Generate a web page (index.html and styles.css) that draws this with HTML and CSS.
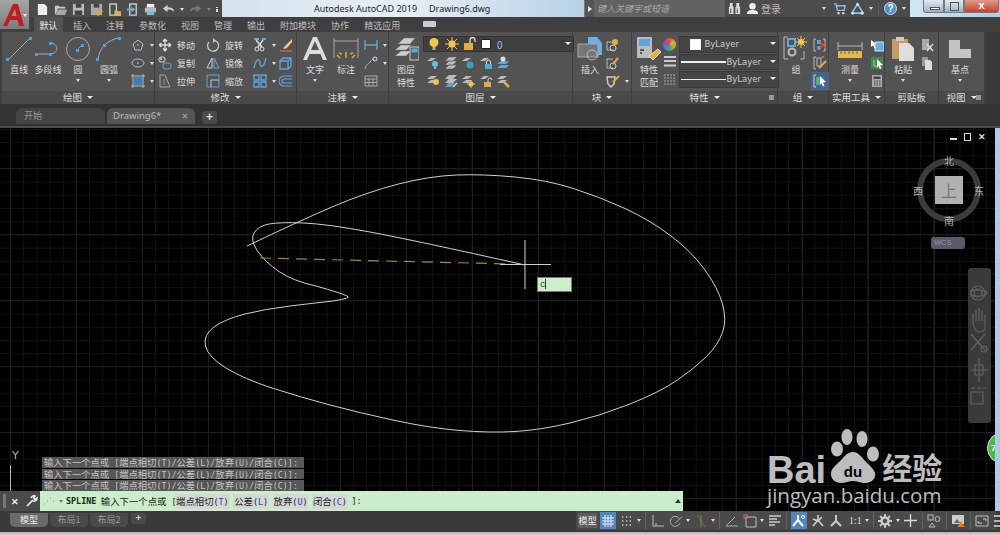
FILE: index.html
```html
<!DOCTYPE html>
<html lang="zh-CN">
<head>
    <meta charset="UTF-8">
    <title>Autodesk AutoCAD 2019 - Drawing6.dwg</title>
    <link rel="stylesheet" href="styles.css">
</head>
<body>
    <div class="app-btn">
        <svg viewBox="0 0 30 30" width="30" height="30"><path fill-rule="evenodd" d="M3 26 L13 4 H18 L24 26 H19 L17.500 20 H10 L7.500 26 Z M11.500 16 H16.500 L15 9 Z" fill="#bf1d22"/></svg>
        <span class="app-caret"></span>
    </div>

    <header class="titlebar">
        <div class="qat">
            <svg class="qi" viewBox="0 0 14 14"><path d="M2 1h7l3 3v9H2z" fill="#eee"/></svg>
            <svg class="qi" viewBox="0 0 14 14"><path d="M1 3h4l1 1h6v2H4L2 12H1z" fill="#ccc"/><path d="M4 7h10l-2 6H2z" fill="#aaa"/></svg>
            <svg class="qi" viewBox="0 0 14 14"><path d="M1 1h12v12H1z" fill="#bbb"/><path d="M4 1h6v4H4zM3 8h8v5H3z" fill="#444"/></svg>
            <svg class="qi" viewBox="0 0 14 14"><path d="M1 1h12v12H1z" fill="#aaa"/><path d="M4 1h6v4H4z" fill="#444"/><path d="M6 12l6-5 2 2-5 5z" fill="#e0a63c"/></svg>
            <svg class="qi" viewBox="0 0 14 14"><path d="M2 1h7v12H2z" fill="none" stroke="#ccc" stroke-width="1.500"/><path d="M7 8h3l1 1h3v5H7z" fill="#e0b050"/></svg>
            <svg class="qi" viewBox="0 0 14 14"><path d="M4 1h7v12H4z" fill="none" stroke="#ccc" stroke-width="1.500"/><path d="M1 6h5V4l4 3-4 3V8H1z" fill="#6ab0e8"/></svg>
            <svg class="qi" viewBox="0 0 14 14"><path d="M3 1h8v4H3z" fill="#eee"/><path d="M1 5h12v5H1z" fill="#bbb"/><path d="M3 9h8v4H3z" fill="#79b7e6"/></svg>
            <svg class="qi" viewBox="0 0 14 14"><path d="M1 6l5-4v2.500c4 0 7 1 7 5-2-2-4-2.500-7-2.500V10z" fill="#ccc"/></svg>
            <span class="caret"></span>
            <svg class="qi" viewBox="0 0 14 14"><path d="M13 6L8 2v2.500c-4 0-7 1-7 5 2-2 4-2.500 7-2.500V10z" fill="#777"/></svg>
            <span class="caret dim"></span>
            <span class="qat-more"></span>
        </div>
        <div class="glass">
            <span class="app-name">Autodesk AutoCAD 2019</span>
            <span class="doc-name">Drawing6.dwg</span>
        </div>
        <div class="search-arrow"></div>
        <div class="search">键入关键字或短语</div>
        <div class="infocenter">
            <svg class="qi" viewBox="0 0 14 14"><path d="M1 5h5v8H1zM8 5h5v8H8zM2 1h3v4H2zM9 1h3v4H9z" fill="#ddd"/><path d="M3 7v5M10 7v5" stroke="#444"/></svg>
            <svg class="qi" viewBox="0 0 14 14"><circle cx="7" cy="4.500" r="3.500" fill="#eee"/><path d="M1 13c0-4 3-4.500 6-4.500s6 .5 6 4.500z" fill="#eee"/></svg>
            <span class="login">登录</span>
            <span class="caret"></span>
            <svg class="qi cart" viewBox="0 0 14 14"><path d="M1 2h2l2 7h7l1-5H4" fill="none" stroke="#8cc0ea" stroke-width="1.500"/><circle cx="6" cy="12" r="1.300" fill="#ddd"/><circle cx="11" cy="12" r="1.300" fill="#ddd"/></svg>
            <svg class="qi" viewBox="0 0 14 14"><path d="M7 2L13 12H1z" fill="none" stroke="#8cc0ea" stroke-width="1.800"/><circle cx="7" cy="3" r="1.600" fill="#ddd"/><circle cx="2" cy="12" r="1.600" fill="#ddd"/><circle cx="12" cy="12" r="1.600" fill="#ddd"/></svg>
            <span class="caret"></span>
            <span class="info-sep"></span>
            <span class="help">?</span>
            <span class="caret"></span>
        </div>
        <div class="glass-right">
            <div class="winbtns">
                <span class="winbtn min"></span>
                <span class="winbtn max"></span>
                <span class="winbtn close">x</span>
            </div>
        </div>
    </header>

    <nav class="ribbon-tabs">
        <span class="rtab active">默认</span>
        <span class="rtab">插入</span>
        <span class="rtab">注释</span>
        <span class="rtab">参数化</span>
        <span class="rtab">视图</span>
        <span class="rtab">管理</span>
        <span class="rtab">输出</span>
        <span class="rtab">附加模块</span>
        <span class="rtab">协作</span>
        <span class="rtab">精选应用</span>
        <span class="rtab-video"></span>
    </nav>

    <section class="ribbon">
        <!-- 绘图 -->
        <div class="panel w-draw">
            <div class="panel-body">
                <div class="big w28">
                    <svg width="26" height="26" viewBox="0 0 26 26"><path d="M2 24L24 2" stroke="#aaa"/><rect x="0" y="22" width="3" height="3" fill="#4aa3e0"/><rect x="23" y="1" width="3" height="3" fill="#4aa3e0"/></svg>
                    <span>直线</span>
                </div>
                <div class="big w30">
                    <svg width="26" height="26" viewBox="0 0 26 26"><path d="M1 18H15C24 18 24 7 15 7" fill="none" stroke="#aaa"/><rect x="0" y="17" width="3" height="3" fill="#4aa3e0"/><rect x="14" y="17" width="3" height="3" fill="#4aa3e0"/><rect x="14" y="6" width="3" height="3" fill="#4aa3e0"/></svg>
                    <span>多段线</span>
                </div>
                <div class="big w30">
                    <svg width="26" height="26" viewBox="0 0 26 26"><circle cx="13" cy="13" r="11.500" fill="none" stroke="#aaa"/><path d="M12 14L17 9" stroke="#4aa3e0"/><rect x="11" y="13" width="3" height="3" fill="#4aa3e0"/><rect x="16" y="8" width="3" height="3" fill="#4aa3e0"/></svg>
                    <span>圆</span><i class="caret"></i>
                </div>
                <div class="big w32">
                    <svg width="26" height="26" viewBox="0 0 26 26"><path d="M2 24C3 12 12 3 24 2" fill="none" stroke="#aaa"/><rect x="0" y="22" width="3" height="3" fill="#4aa3e0"/><rect x="7" y="8" width="3" height="3" fill="#4aa3e0"/><rect x="22" y="1" width="3" height="3" fill="#4aa3e0"/></svg>
                    <span>圆弧</span><i class="caret"></i>
                </div>
                <div class="col icons-only gap-l">
                    <div class="row"><svg class="si" viewBox="0 0 14 14"><path d="M7 2l5 4-2 6H4L2 6z" fill="none" stroke="#bbb"/><rect x="6" y="6" width="2" height="2" fill="#4aa3e0"/></svg><i class="caret"></i></div>
                    <div class="row"><svg class="si" viewBox="0 0 14 14"><ellipse cx="7" cy="7" rx="6" ry="4" fill="none" stroke="#bbb"/><rect x="6" y="6" width="2" height="2" fill="#4aa3e0"/></svg><i class="caret"></i></div>
                    <div class="row"><svg class="si" viewBox="0 0 14 14"><path d="M2 0v14M12 0v14M0 2h14M0 12h14" stroke="#bbb"/><rect x="3" y="3" width="8" height="8" fill="#3f7fb5"/></svg><i class="caret"></i></div>
                </div>
            </div>
            <div class="panel-title">绘图<i class="caret lt"></i></div>
        </div>

        <!-- 修改 -->
        <div class="panel w-modify">
            <div class="panel-body">
                <div class="col w48">
                    <div class="row"><svg class="si" viewBox="0 0 14 14"><path d="M7 1v12M1 7h12M7 1L5 3.500M7 1l2 2.500M7 13l-2-2.500M7 13l2-2.500M1 7l2.500-2M1 7l2.500 2M13 7l-2.500-2M13 7l-2.500 2" fill="none" stroke="#ddd" stroke-width="1.300"/></svg><span>移动</span></div>
                    <div class="row"><svg class="si" viewBox="0 0 14 14"><rect x="1" y="1" width="6" height="5" rx="2" fill="none" stroke="#ddd"/><circle cx="3" cy="3" r="1" fill="#ddd"/><rect x="5" y="7" width="8" height="6" rx="2" fill="none" stroke="#5fa6dc"/></svg><span>复制</span></div>
                    <div class="row"><svg class="si" viewBox="0 0 14 14"><path d="M2 1h5l5 12H2z" fill="none" stroke="#aaa"/><path d="M6 5v6" stroke="#5fa6dc"/></svg><span>拉伸</span></div>
                </div>
                <div class="col w45">
                    <div class="row"><svg class="si" viewBox="0 0 14 14"><path d="M9 2.500A5.500 5.500 0 1 1 3 4" fill="none" stroke="#ccc" stroke-width="1.300"/><path d="M7 0l3 2.500L7 5z" fill="#ccc"/></svg><span>旋转</span></div>
                    <div class="row"><svg class="si" viewBox="0 0 14 14"><path d="M6 2L1 12h5z" fill="none" stroke="#ccc"/><path d="M8 2l5 10H8z" fill="none" stroke="#5fa6dc"/></svg><span>镜像</span></div>
                    <div class="row"><svg class="si" viewBox="0 0 14 14"><path d="M1 1h12v12H1z" fill="none" stroke="#5fa6dc"/><path d="M5 13V6h8" fill="none" stroke="#ccc"/></svg><span>缩放</span></div>
                </div>
                <div class="col icons-only w27">
                    <div class="row"><svg class="si" viewBox="0 0 14 14"><path d="M1 1h5M9 1h4" stroke="#6aa9dc" stroke-width="2"/><path d="M3 2l6 7M10 2L5 9" stroke="#ddd" stroke-width="1.500"/><circle cx="4" cy="11" r="2" fill="none" stroke="#ddd"/><circle cx="9" cy="11" r="2" fill="none" stroke="#ddd"/></svg><i class="caret"></i></div>
                    <div class="row"><svg class="si" viewBox="0 0 14 14"><path d="M1 12C3 2 7 2 7 7s4 5 6-5" fill="none" stroke="#5fa6dc" stroke-width="1.300"/></svg><i class="caret"></i></div>
                    <div class="row"><svg class="si" viewBox="0 0 14 14"><path d="M1 1h5v5H1zM8 1h5v5H8zM1 8h5v5H1zM8 8h5v5H8z" fill="none" stroke="#5fa6dc" stroke-width="1.300"/></svg><i class="caret"></i></div>
                </div>
                <div class="col icons-only">
                    <div class="row"><svg class="si" viewBox="0 0 14 14"><path d="M13 1L6 8l2 2 5-6z" fill="#f0c878"/><path d="M6 8l-2 3 4-1z" fill="#ddd"/><path d="M1 13h12" stroke="#d85a4a" stroke-width="1.500"/></svg></div>
                    <div class="row"><svg class="si" viewBox="0 0 14 14"><path d="M1 5h8v8H1zM1 5l3-3h8v8l-3 3M9 5l3-3" fill="none" stroke="#5fa6dc" stroke-width="1.300"/></svg></div>
                    <div class="row"><svg class="si" viewBox="0 0 14 14"><path d="M13 2H5a5 5 0 0 0 0 10h8M13 5H5a2 2 0 0 0 0 4h8" fill="none" stroke="#5fa6dc" stroke-width="1.200"/></svg></div>
                </div>
            </div>
            <div class="panel-title">修改<i class="caret lt"></i></div>
        </div>

        <!-- 注释 -->
        <div class="panel w-note">
            <div class="panel-body">
                <div class="big w30">
                    <svg width="26" height="26" viewBox="0 0 26 26"><path fill-rule="evenodd" d="M1 24L11 1h4l10 23h-4l-2.500-6H7.500L5 24zM9 14h8l-4-9z" fill="#ddd"/></svg>
                    <span>文字</span><i class="caret"></i>
                </div>
                <div class="big w32">
                    <svg width="26" height="26" viewBox="0 0 26 26"><path d="M1 2v20M25 2v20M1 5h24" stroke="#aaa" fill="none"/><path d="M13 22v-6M7 22l-3-3M19 22l3-3M9 18l-3-1M17 18l3-1" stroke="#e0a63c" stroke-width="1.500"/></svg>
                    <span>标注</span>
                </div>
                <div class="col icons-only">
                    <div class="row"><svg class="si" viewBox="0 0 14 14"><path d="M1 2v10M13 2v10M1 7h12" stroke="#5fa6dc" stroke-width="1.300"/></svg><i class="caret"></i></div>
                    <div class="row"><svg class="si" viewBox="0 0 14 14"><path d="M1 13C2 8 4 9 6 6s3-3 4-3" fill="none" stroke="#bbb"/><circle cx="11" cy="3" r="2" fill="none" stroke="#ddd"/></svg><i class="caret"></i></div>
                    <div class="row"><svg class="si" viewBox="0 0 14 14"><path d="M1 2h12v10H1zM1 5h12M1 8.500h12M5 5v7M9 5v7" fill="none" stroke="#aaa"/></svg></div>
                </div>
            </div>
            <div class="panel-title">注释<i class="caret lt"></i></div>
        </div>

        <!-- 图层 -->
        <div class="panel w-layer">
            <div class="panel-body">
                <div class="big w28">
                    <svg width="26" height="26" viewBox="0 0 26 26"><path d="M5 8l6-6h11l-5 6zM2 14l6-5h10l-5 5zM2 20l6-5h10l-5 5z" fill="#ccc" stroke="#666" stroke-width=".5"/><rect x="17" y="11" width="9" height="13" fill="#555" stroke="#ccc"/><rect x="18.500" y="12.500" width="6" height="4" fill="#5fa6dc"/></svg>
                    <span>图层</span><span class="second">特性</span>
                </div>
                <div class="layer-main">
                    <div class="layer-combo">
                        <svg class="si" viewBox="0 0 14 14"><circle cx="7" cy="5.500" r="4.500" fill="#f5c44e"/><path d="M5.500 10h3v3h-3z" fill="#aaa"/></svg>
                        <svg class="si" viewBox="0 0 14 14"><circle cx="7" cy="7" r="3.500" fill="#f5c44e"/><path d="M7 0v14M0 7h14M2 2l10 10M12 2L2 12" stroke="#f5c44e"/></svg>
                        <svg class="si" viewBox="0 0 14 14"><rect x="1" y="6" width="9" height="7" fill="#e6ac3c"/><path d="M7 6V3a2.500 2.500 0 0 1 5 0v2" fill="none" stroke="#ddd" stroke-width="1.300"/></svg>
                        <span class="swatch"></span>
                        <span class="layer-name">0</span>
                        <i class="combo-caret"></i>
                    </div>
                    <div class="layer-row">
                        <svg class="si" viewBox="0 0 14 14"><path d="M1 5l4-3h5L6 5z" fill="#bbb"/><circle cx="9" cy="8" r="3" fill="#63c0e0"/><path d="M8 11h2v2H8z" fill="#aaa"/></svg>
                        <svg class="si" viewBox="0 0 14 14"><path d="M1 5l4-4h8L9 5zM1 9l4-4h8L9 9zM1 13l4-4h8L9 13z" fill="#bbb" stroke="#555" stroke-width=".5"/></svg>
                        <svg class="si" viewBox="0 0 14 14"><path d="M1 5l4-3h5L6 5z" fill="#bbb"/><circle cx="9" cy="9" r="3.500" fill="#3fa0b5"/></svg>
                        <svg class="si" viewBox="0 0 14 14"><path d="M1 5l4-3h5L6 5z" fill="#bbb"/><rect x="6" y="8" width="7" height="5" fill="#4bb0d0"/><path d="M7.500 8V6a2 2 0 0 1 4 0v2" fill="none" stroke="#ddd"/></svg>
                        <svg class="si" viewBox="0 0 14 14"><path d="M1 8l4-3h8l-3 3zM1 12l4-3h8l-3 3z" fill="#5fa6dc"/><circle cx="7" cy="3" r="2.500" fill="#ddd"/></svg>
                    </div>
                    <div class="layer-row">
                        <svg class="si" viewBox="0 0 14 14"><path d="M1 5l4-3h6L7 5zM1 9l4-3h6L7 9z" fill="#bbb"/><circle cx="10" cy="8" r="3" fill="#f5c44e"/></svg>
                        <svg class="si" viewBox="0 0 14 14"><path d="M1 5l4-4h8L9 5zM1 9l4-4h8L9 9z" fill="#bbb"/><path d="M1 13l4-4h6l-4 4z" fill="#5fa6dc"/><path d="M9 13l4-4" stroke="#ddd" stroke-width="1.500"/></svg>
                        <svg class="si" viewBox="0 0 14 14"><path d="M1 5l4-3h6L7 5zM1 9l4-3h6L7 9z" fill="#bbb"/><circle cx="10" cy="10" r="2.500" fill="#f5c44e"/><path d="M10 6v8M6 10h8" stroke="#f5c44e"/></svg>
                        <svg class="si" viewBox="0 0 14 14"><path d="M1 5l4-3h5L6 5z" fill="#bbb"/><rect x="5" y="8" width="7" height="5" fill="#e6ac3c"/><path d="M9 8V6a2 2 0 0 1 4 0" fill="none" stroke="#ddd"/></svg>
                        <svg class="si" viewBox="0 0 14 14"><path d="M1 5l4-3h6L7 5zM1 9l4-3h6L7 9z" fill="#bbb"/><path d="M8 8l5 5" stroke="#e6ac3c" stroke-width="2.500"/></svg>
                    </div>
                </div>
            </div>
            <div class="panel-title">图层<i class="caret lt"></i></div>
        </div>

        <!-- 块 -->
        <div class="panel w-block">
            <div class="panel-body">
                <div class="big w28">
                    <svg width="26" height="26" viewBox="0 0 26 26"><path d="M11 1h9l5 6v12H11z" fill="#6ab0e8"/><rect x="1" y="8" width="20" height="13" fill="#777" stroke="#aaa"/><circle cx="15" cy="19" r="5" fill="none" stroke="#bbb"/></svg>
                    <span>插入</span>
                </div>
                <div class="col icons-only">
                    <div class="row"><svg class="si" viewBox="0 0 14 14"><path d="M1 4h6M1 4v8h6" fill="none" stroke="#bbb"/><circle cx="9" cy="4" r="3" fill="#e6ac3c"/><circle cx="7" cy="10" r="3" fill="none" stroke="#ccc"/></svg></div>
                    <div class="row"><svg class="si" viewBox="0 0 14 14"><path d="M1 3h6M1 3v9h6" fill="none" stroke="#bbb"/><circle cx="7" cy="10" r="3" fill="none" stroke="#ccc"/><path d="M7 8l5-6" stroke="#e6ac3c" stroke-width="2"/></svg></div>
                    <div class="row"><svg class="si" viewBox="0 0 14 14"><path d="M1 3h8l-1 7-3 3-3-3z" fill="none" stroke="#ccc" stroke-width="1.500"/><path d="M7 8l6-6" stroke="#e6ac3c" stroke-width="2"/></svg><i class="caret"></i></div>
                </div>
            </div>
            <div class="panel-title">块<i class="caret lt"></i></div>
        </div>

        <!-- 特性 -->
        <div class="panel w-prop">
            <div class="panel-body">
                <div class="big w28">
                    <svg width="26" height="26" viewBox="0 0 26 26"><rect x="1" y="1" width="15" height="21" rx="1" fill="#bbb"/><rect x="3" y="3" width="11" height="7" fill="#5fa6dc"/><path d="M4 14h4M4 17h2" stroke="#555" stroke-width="2"/><path d="M13 20l9-7 3 3-8 8z" fill="#e6ac3c" stroke="#ddd"/></svg>
                    <span>特性</span><span class="second">匹配</span>
                </div>
                <div class="col prop-icons">
                    <span class="wheel"></span>
                    <svg class="si" viewBox="0 0 14 14"><path d="M1 2h12M1 6h12M1 10.500h12" stroke="#ccc" stroke-width="2"/></svg>
                    <svg class="si" viewBox="0 0 14 14"><path d="M1 2h12M1 5h12M1 8h12M1 11h12" stroke="#aaa" stroke-dasharray="2 1"/></svg>
                </div>
                <div class="prop-combos">
                    <div class="pcombo"><span class="swatch big-sw"></span><span class="bylayer first">ByLayer</span><i class="combo-caret"></i></div>
                    <div class="pcombo"><span class="ln thick"></span><span class="bylayer">ByLayer</span><i class="combo-caret"></i></div>
                    <div class="pcombo"><span class="ln"></span><span class="bylayer">ByLayer</span><i class="combo-caret"></i></div>
                </div>
            </div>
            <div class="panel-title">特性<i class="caret lt"></i><i class="launch"></i></div>
        </div>

        <!-- 组 -->
        <div class="panel w-group">
            <div class="panel-body">
                <div class="big w30">
                    <svg width="26" height="26" viewBox="0 0 26 26"><path d="M5 1H1v22h4M17 23h4v-8" fill="none" stroke="#bbb"/><rect x="5" y="3" width="7" height="7" fill="none" stroke="#5fa6dc" stroke-width="2"/><circle cx="9" cy="16" r="3.500" fill="none" stroke="#bbb" stroke-width="2"/><circle cx="18" cy="6" r="3" fill="#f5c44e"/><path d="M18 0v12M12 6h12M14 2l8 8M22 2l-8 8" stroke="#f5c44e"/></svg>
                    <span>组</span>
                </div>
                <div class="col icons-only">
                    <div class="row"><svg class="si" viewBox="0 0 14 14"><path d="M3 1H1v12h2M10 1h2v12h-2" fill="none" stroke="#bbb"/><rect x="4" y="2" width="4" height="4" fill="#5fa6dc"/><circle cx="6" cy="10" r="2" fill="#5fa6dc"/><path d="M7 4l6 6M13 4l-6 6" stroke="#d84a3c" stroke-width="1.500"/></svg></div>
                    <div class="row"><svg class="si" viewBox="0 0 14 14"><path d="M3 1H1v12h2M9 1h2" fill="none" stroke="#bbb"/><rect x="4" y="2" width="4" height="8" fill="none" stroke="#bbb"/><path d="M6 12l7-7" stroke="#e6ac3c" stroke-width="2"/></svg></div>
                    <div class="row selected"><svg class="si" viewBox="0 0 14 14"><path d="M3 1H1v12h2" fill="none" stroke="#ccc"/><rect x="3" y="3" width="4" height="8" fill="#4fb080"/><path d="M7 2l6 6-3 .5 1.500 3.500-1.500 .5L8.500 9 7 11z" fill="#fff"/></svg></div>
                </div>
            </div>
            <div class="panel-title">组<i class="caret lt"></i></div>
        </div>

        <!-- 实用工具 -->
        <div class="panel w-util">
            <div class="panel-body">
                <div class="big w36">
                    <svg width="26" height="26" viewBox="0 0 26 26"><path d="M1 6v8M25 6v8M1 10h24" stroke="#bbb"/><rect x="1" y="15" width="24" height="7" fill="#e2b94a"/><path d="M4 15v3M8 15v3M12 15v3M16 15v3M20 15v3" stroke="#665" /></svg>
                    <span>测量</span><i class="caret"></i>
                </div>
                <div class="col icons-only">
                    <div class="row"><svg class="si" viewBox="0 0 14 14"><rect x="5" y="4" width="9" height="9" fill="#6ab0e8" stroke="#ddd"/><path d="M1 2l5 4-2 .5 2 3-1.500.5L3 7.500 1 9z" fill="#fff"/></svg></div>
                    <div class="row"><svg class="si" viewBox="0 0 14 14"><rect x="1" y="1" width="12" height="12" fill="#3f8a50"/><path d="M4 4v6h4" fill="none" stroke="#9fd6a8"/><path d="M7 3l6 6-3 .5 1.500 3-1.500 .5L8.500 10 7 12z" fill="#fff"/></svg></div>
                    <div class="row"><svg class="si" viewBox="0 0 14 14"><rect x="2" y="1" width="10" height="12" fill="#aaa"/><rect x="3.500" y="2.500" width="7" height="2.500" fill="#444"/><path d="M4 7h1.500M6.500 7H8M9 7h1.500M4 9h1.500M6.500 9H8M9 9h1.500M4 11h1.500M6.500 11H8M9 11h1.500" stroke="#444"/></svg></div>
                </div>
            </div>
            <div class="panel-title">实用工具<i class="caret lt"></i></div>
        </div>

        <!-- 剪贴板 -->
        <div class="panel w-clip">
            <div class="panel-body">
                <div class="big w30">
                    <svg width="26" height="26" viewBox="0 0 26 26"><path d="M2 3h16v20H2z" fill="#c89a5e"/><rect x="6" y="1" width="8" height="4" fill="#ccc"/><path d="M9 7h10l5 5v13H9z" fill="#ddd"/></svg>
                    <span>粘贴</span><i class="caret"></i>
                </div>
                <div class="col icons-only">
                    <div class="row"><svg class="si" viewBox="0 0 14 14"><path d="M2 1h7v11H2z" fill="#aaa"/><path d="M7 6l6 7M13 6l-6 7" stroke="#ddd" stroke-width="1.500"/></svg></div>
                    <div class="row"><svg class="si" viewBox="0 0 14 14"><path d="M2 1h6v9H2z" fill="#999"/><path d="M5 4h5l2 2v8H5z" fill="#ddd"/></svg></div>
                </div>
            </div>
            <div class="panel-title">剪贴板</div>
        </div>

        <!-- 视图 -->
        <div class="panel w-view">
            <div class="panel-body">
                <div class="big w36">
                    <svg width="26" height="26" viewBox="0 0 26 26"><path d="M2 4h11v9h11v9H2z" fill="#c4c4c4"/></svg>
                    <span>基点</span><i class="caret"></i>
                </div>
            </div>
            <div class="panel-title">视图<i class="caret lt"></i><i class="launch"></i></div>
        </div>
        <div class="ribbon-end"></div>
    </section>

    <div class="file-tabs">
        <span class="ftab">开始</span>
        <span class="ftab current">Drawing6*<b>×</b></span>
        <span class="ftab-add">+</span>
    </div>

    <main class="canvas">
        <svg class="drawing" viewBox="0 0 1000 534" width="1000" height="534">
            <path d="M247 246 Q297 222 332 207 Q367 192 398.500 184 Q430 176 456.500 175 Q483 174 515 177 Q547 180 573.500 188.500 Q600 197 625 208.500 Q650 220 671 236 Q692 252 705 270 Q718 288 722.500 304 Q727 320 722.500 332.500 Q718 345 706.500 356.500 Q695 368 677.500 380 Q660 392 630 404 Q600 416 570 423 Q540 430 515 431.500 Q490 433 460 430.500 Q430 428 395 420.500 Q360 413 330 405 Q300 397 272 388 Q244 379 226 368 Q208 357 205.500 346 Q203 335 214 327 Q225 319 245 314 Q265 309 290 306 Q315 303 333 301 Q353 298 347 296 Q341 293 316 286 Q293 281 279 271.500 Q265 262 257.500 251 Q250 240 254 233 Q258 226 269 224 Q280 222 303.500 223 Q327 224 370 232 Q413 240 525 265" fill="none" stroke="#d0d0d0" stroke-width="1"/>
            <path d="M260 258 L510 264" fill="none" stroke="#a8852c" stroke-width="1.200" stroke-dasharray="11 7"/>
            <path d="M525 240V289M500 264.500H551" stroke="#cfcfcf" stroke-width="1"/>
            <path d="M10.500 465V491" stroke="#bbb"/>
        </svg>

        <div class="win-ctrl">
            <span class="wc-min"></span><span class="wc-max"></span><span class="wc-close">✕</span>
        </div>

        <div class="viewcube">
            <span class="ring"></span>
            <span class="face">上</span>
            <span class="dir n">北</span>
            <span class="dir s">南</span>
            <span class="dir w">西</span>
            <span class="dir e">东</span>
        </div>
        <div class="wcs">WCS<i></i></div>

        <div class="navbar">
            <svg width="20" height="150" viewBox="0 0 20 150" fill="none" stroke="#626262" stroke-width="1.200">
                <circle cx="8" cy="19" r="7"/><circle cx="8" cy="19" r="4"/><ellipse cx="8" cy="19" rx="9" ry="3"/>
                <path d="M3 49V39M6 47V36M9 47V34M12 47V36M15 49V41M3 49c1 6 3 9 7 9s6-3 5-9"/>
                <path d="M1 60L15 76M15 60L1 76"/><circle cx="14" cy="75" r="3"/>
                <path d="M9 84V108M1 96H18M5 91H13V101H5Z"/>
                <path d="M1 114H5M7 114H11M13 114H17M1 118H13V130H1Z"/>
            </svg>
        </div>

        <div class="dyn-input">c</div>

        <div class="ucs-y">Y</div>

        <div class="history">
            <div>输入下一个点或<span class="lat"> [</span>端点相切<span class="lat">(T)/</span>公差<span class="lat">(L)/</span>放弃<span class="lat">(U)/</span>闭合<span class="lat">(C)]:</span></div>
            <div>输入下一个点或<span class="lat"> [</span>端点相切<span class="lat">(T)/</span>公差<span class="lat">(L)/</span>放弃<span class="lat">(U)/</span>闭合<span class="lat">(C)]:</span></div>
            <div>输入下一个点或<span class="lat"> [</span>端点相切<span class="lat">(T)/</span>公差<span class="lat">(L)/</span>放弃<span class="lat">(U)/</span>闭合<span class="lat">(C)]:</span></div>
        </div>

        <div class="cmdline">
            <div class="cmd-handle">
                <span class="grip"></span>
                <span class="cmd-x">✕</span>
                <svg width="12" height="12" viewBox="0 0 12 12"><path d="M1 11L7 5M5 3a3 3 0 0 1 4-2L7.500 3 9 4.500 11 3a3 3 0 0 1-4 3" fill="none" stroke="#eee" stroke-width="1.600"/></svg>
            </div>
            <div class="cmd-input">
                <svg width="12" height="10" viewBox="0 0 12 10"><path d="M1 8h1M4 5h1M7 2h1M10 5h1" stroke="#7ab4dc" stroke-width="1.200"/></svg>
                <i class="caret dark"></i>
                <b class="lat">SPLINE</b>
                <span>输入下一个点或<span class="lat"> [</span></span>
                <span class="opt first">端点相切<span class="lat">(<em>T</em>)</span></span>
                <span class="opt">公差<span class="lat">(<em>L</em>)</span></span>
                <span class="opt">放弃<span class="lat">(<em>U</em>)</span></span>
                <span class="opt">闭合<span class="lat">(<em>C</em>)</span></span>
                <span class="lat">]:</span>
                <i class="cmd-up"></i>
            </div>
        </div>

        <div class="badge">73</div>

        <div class="watermark">
            <div class="wm-top">
                <span class="wm-bai">Bai</span>
                <svg class="wm-paw" width="52" height="55" viewBox="0 0 52 55">
                    <ellipse cx="8" cy="21" rx="6" ry="7.500" fill="#bdbdbd"/>
                    <ellipse cx="18" cy="9" rx="5.500" ry="8" fill="#bdbdbd"/>
                    <ellipse cx="33" cy="11" rx="5.500" ry="8" fill="#bdbdbd"/>
                    <ellipse cx="44" cy="26" rx="6" ry="7.500" fill="#bdbdbd"/>
                    <path d="M24 24c6 0 9 6 14 11c7 6 9 10 8 13c-1 5-6 7-10 7c-4 0-8-2-12-2s-8 2-12 2c-6 0-10-4-10-9c0-5 4-8 8-12c4-3 7-10 14-10z" fill="#bdbdbd"/>
                    <text x="24" y="49" text-anchor="middle" class="wm-du">du</text>
                </svg>
                <span class="wm-jy">经验</span>
            </div>
            <div class="wm-url">jingyan.baidu.com</div>
        </div>
    </main>

    <footer class="bottom">
        <div class="layout-tabs">
            <span class="ltab current">模型</span>
            <span class="ltab">布局1</span>
            <span class="ltab">布局2</span>
            <span class="ltab-add">+</span>
        </div>
        <div class="status">
            <span class="st-model">模型</span>
            <span class="st on"><svg width="12" height="12" viewBox="0 0 12 12"><path d="M3 0v12M6 0v12M9 0v12M0 3h12M0 6h12M0 9h12" stroke="#eee"/></svg></span>
            <span class="st"><svg width="12" height="12" viewBox="0 0 12 12"><path d="M1 2h10M1 6h10M1 10h10" stroke="#ccc" stroke-width="1.400" stroke-dasharray="1.400 2.400"/></svg></span>
            <i class="caret"></i>
            <span class="st-sep"></span>
            <span class="st"><svg width="14" height="14" viewBox="0 0 14 14"><path d="M2 1v11h11M5 12V9" fill="none" stroke="#bbb"/></svg></span>
            <span class="st"><svg width="14" height="14" viewBox="0 0 14 14"><path d="M10 4a5 5 0 1 0 1 5M6 9l7-6" fill="none" stroke="#aaa"/></svg></span>
            <i class="caret"></i>
            <span class="st"><svg width="14" height="14" viewBox="0 0 14 14"><path d="M3 1l8 12" stroke="#c44"/><path d="M7 1v12" stroke="#4a4"/></svg></span>
            <i class="caret"></i>
            <span class="st-sep"></span>
            <span class="st"><svg width="14" height="14" viewBox="0 0 14 14"><path d="M1 12h12M1 12l9-9" fill="none" stroke="#aaa"/></svg></span>
            <span class="st"><svg width="14" height="14" viewBox="0 0 14 14"><path d="M3 3h10v10H3z" fill="none" stroke="#bbb"/><rect x="1" y="1" width="3" height="3" fill="none" stroke="#d66"/></svg></span>
            <i class="caret"></i>
            <span class="st"><svg width="14" height="14" viewBox="0 0 14 14"><path d="M1 2h12M1 5h8M1 8h11M1 11h6" stroke="#ccc" stroke-width="1.500"/></svg></span>
            <span class="st-sep"></span>
            <span class="st on"><svg width="14" height="14" viewBox="0 0 14 14"><path d="M6 1v5L1 12M6 6l5 6" fill="none" stroke="#fff" stroke-width="2"/><circle cx="11" cy="3" r="1.500" fill="none" stroke="#fff"/></svg></span>
            <span class="st"><svg width="14" height="14" viewBox="0 0 14 14"><path d="M7 1v5L2 12M7 6l5 6M2 5l5 2 4-4" fill="none" stroke="#ccc" stroke-width="1.600"/></svg></span>
            <span class="st"><svg width="14" height="14" viewBox="0 0 14 14"><path d="M7 1v6L2 12M7 7l5 5" fill="none" stroke="#ccc" stroke-width="2"/></svg></span>
            <span class="st-scale">1:1</span>
            <i class="caret"></i>
            <span class="st-sep"></span>
            <span class="st"><svg width="14" height="14" viewBox="0 0 14 14"><circle cx="7" cy="7" r="3.500" fill="none" stroke="#ccc" stroke-width="2.500"/><path d="M7 0v3M7 11v3M0 7h3M11 7h3M2 2l2 2M10 10l2 2M12 2l-2 2M4 10l-2 2" stroke="#ccc" stroke-width="1.800"/></svg></span>
            <i class="caret"></i>
            <span class="st plus"><svg width="13" height="13" viewBox="0 0 13 13"><path d="M6.500 0v13M0 6.500h13" stroke="#ddd" stroke-width="1.300"/></svg></span>
            <span class="st-sep"></span>
            <span class="st"><svg width="14" height="14" viewBox="0 0 14 14"><rect x="1" y="1" width="5" height="5" fill="none" stroke="#bbb"/><circle cx="10.500" cy="5" r="2.500" fill="none" stroke="#bbb"/><path d="M5 9l3 4H2z" fill="none" stroke="#bbb"/></svg></span>
            <span class="st-sep"></span>
            <span class="st"><svg width="14" height="14" viewBox="0 0 14 14"><rect x="1" y="1" width="12" height="9" fill="#ccc"/><path d="M3 9l3-4 3 4z" fill="#666"/><path d="M10 7l3.500 6h-7z" fill="#e87c20"/></svg></span>
            <span class="st-sep"></span>
            <span class="st"><svg width="14" height="14" viewBox="0 0 14 14"><path d="M1 2h12v10H1z" fill="none" stroke="#bbb"/><path d="M3 9h4M3 9V7M11 5H8M11 5v2" stroke="#ccc"/></svg></span>
            <span class="st last"><svg width="14" height="14" viewBox="0 0 14 14"><path d="M1 2h12M1 7h12M1 12h12" stroke="#ddd" stroke-width="1.500"/></svg></span>
        </div>
    </footer>
    <div class="window-edge"></div>
</body>
</html>
```

FILE: styles.css
```css
* {
    box-sizing: border-box;
}

html, body {
    margin: 0;
    padding: 0;
    height: 534px;
    overflow: hidden;
}

body {
    width: 1000px;
    display: flex;
    flex-direction: column;
    position: relative;
    background-color: #3a3a3a;
    color: #ddd;
    font-family: "Noto Sans CJK SC", "Liberation Sans", sans-serif;
    font-size: 9px;
}

svg {
    display: block;
    flex: none;
}

i {
    font-style: normal;
}

.caret {
    display: inline-block;
    flex: none;
    width: 0;
    height: 0;
    border-left: 2.500px solid transparent;
    border-right: 2.500px solid transparent;
    border-top: 3px solid #ddd;
}

.caret.dim {
    border-top-color: #888;
}

.caret.lt {
    margin-left: 5px;
    border-left-width: 3.500px;
    border-right-width: 3.500px;
    border-top-width: 3.500px;
    border-top-color: #eee;
}

.caret.dark {
    border-top-color: #777;
}

/* title bar */
.app-btn {
    position: absolute;
    left: 0;
    top: 0;
    z-index: 3;
    width: 30px;
    height: 30px;
    background: linear-gradient(#a6a6a6, #7c7c7c);
    border-right: 1px solid #444;
    border-bottom: 1px solid #444;
}

.app-caret {
    position: absolute;
    right: 2px;
    top: 14px;
    border-left: 2.500px solid transparent;
    border-right: 2.500px solid transparent;
    border-top: 3px solid #eee;
}

.titlebar {
    height: 17px;
    flex: none;
    display: flex;
}

.qat {
    width: 222px;
    padding: 1px 4px 0 36px;
    display: flex;
    gap: 5px;
    align-items: center;
    background-color: #4c4c4c;
}

.qi {
    width: 13px;
    height: 13px;
}

.qat-more {
    width: 6px;
    height: 5px;
    border-top: 1px solid #ddd;
    border-bottom: 3px solid #ddd;
}

.glass {
    width: 362px;
    padding-left: 92px;
    display: flex;
    align-items: center;
    gap: 12px;
    background: linear-gradient(90deg, #d5e3f0, #e6eff6 50%, #b7d1e6);
    color: #222;
    font-family: "Noto Sans", sans-serif;
    font-size: 9px;
    white-space: nowrap;
}

.search-arrow {
    width: 10px;
    background-color: #555;
    border-left: 1px solid #777;
    position: relative;
}

.search-arrow::after {
    content: "";
    position: absolute;
    left: 3px;
    top: 6px;
    border-top: 3px solid transparent;
    border-bottom: 3px solid transparent;
    border-left: 4px solid #eee;
}

.search {
    width: 131px;
    padding: 1px 0 0 3px;
    background-color: #626262;
    color: #a8a8a8;
    font-size: 9px;
    font-style: italic;
    line-height: 16px;
}

.infocenter {
    width: 185px;
    padding-left: 3px;
    display: flex;
    align-items: center;
    gap: 5px;
    background-color: #4c4c4c;
}

.login {
    width: 56px;
    margin-left: -3px;
    color: #bbb;
    font-size: 10px;
}

.cart {
    margin-left: 2px;
}

.info-sep {
    width: 1px;
    height: 13px;
    background-color: #5c5c5c;
}

.help {
    width: 13px;
    height: 13px;
    border-radius: 50%;
    background-color: #4a90d4;
    border: 1px solid #ddd;
    color: #fff;
    font-family: "Liberation Sans", sans-serif;
    font-size: 10px;
    font-weight: bold;
    line-height: 11px;
    text-align: center;
}

.glass-right {
    flex: 1;
    background: linear-gradient(90deg, #d5e6f4, #a8cde8);
    position: relative;
}

.winbtns {
    position: absolute;
    left: 13px;
    top: 0;
    display: flex;
    height: 13px;
}

.winbtn {
    height: 13px;
    border: 1px solid #777;
    border-top: none;
    background: linear-gradient(#e4ebf2, #9eb0c2);
}

.winbtn.min {
    width: 21px;
    border-radius: 0 0 0 3px;
    position: relative;
}

.winbtn.min::after {
    content: "";
    position: absolute;
    left: 6px;
    top: 7px;
    width: 8px;
    border: 1px solid #555;
    background-color: #fff;
    box-sizing: content-box;
    height: 1px;
}

.winbtn.max {
    width: 20px;
    position: relative;
}

.winbtn.max::after {
    content: "";
    position: absolute;
    left: 5px;
    top: 2px;
    width: 7px;
    height: 7px;
    border: 1px solid #555;
}

.winbtn.close {
    width: 35px;
    border-radius: 0 0 3px 0;
    background: linear-gradient(#e29a8a, #c4402c);
    color: #fff;
    font-family: "Liberation Sans", sans-serif;
    font-size: 11px;
    font-weight: bold;
    line-height: 10px;
    text-align: center;
}

/* ribbon tabs */
.ribbon-tabs {
    height: 15px;
    flex: none;
    display: flex;
    align-items: flex-end;
    padding-left: 34px;
    gap: 5px;
    background-color: #3f3f3f;
}

.rtab {
    padding: 0 5px;
    height: 15px;
    line-height: 17px;
    color: #bdbdbd;
}

.rtab.active {
    width: 29px;
    padding: 0;
    text-align: center;
    background-color: #535353;
    color: #eee;
}

.rtab-video {
    width: 13px;
    height: 6px;
    margin: 0 0 5px 13px;
    background-color: #ccc;
    border-radius: 1px;
}

/* ribbon */
.ribbon {
    height: 72px;
    flex: none;
    display: flex;
    padding-left: 2px;
    gap: 1px;
    background-color: #3f3f3f;
}

.panel {
    display: flex;
    flex-direction: column;
    flex: none;
    background-color: #535353;
}

.w-draw { width: 152px; }
.w-modify { width: 141px; }
.w-note { width: 91px; }
.w-layer { width: 183px; }
.w-block { width: 58px; }
.w-prop { width: 145px; }
.w-group { width: 50px; }
.w-util { width: 55px; }
.w-clip { width: 53px; }
.w-view { width: 45px; }

.ribbon-end {
    flex: 1;
    background-color: #3a3a3a;
}

.panel-body {
    flex: 1;
    display: flex;
    padding: 4px 3px 0;
    min-height: 0;
}

.panel-title {
    height: 13px;
    flex: none;
    display: flex;
    align-items: center;
    justify-content: center;
    background-color: #494949;
    color: #ddd;
    font-size: 9.500px;
    line-height: 13px;
    position: relative;
}

.launch {
    position: absolute;
    right: 3px;
    top: 4px;
    width: 5px;
    height: 5px;
    background-color: #999;
}

.big {
    flex: none;
    display: flex;
    flex-direction: column;
    align-items: center;
    line-height: 12px;
    white-space: nowrap;
}

.big svg {
    margin-bottom: 2px;
}

.big .caret {
    margin-top: 3px;
}

.w28 { width: 28px; }
.w30 { width: 30px; }
.w32 { width: 32px; }
.w36 { width: 36px; }
.w45 { width: 45px; }
.w48 { width: 48px; }
.w27 { width: 30px; }

.big .second {
    margin-top: 1px;
}

.col {
    flex: none;
    display: flex;
    flex-direction: column;
    gap: 4px;
    padding-top: 2px;
}

.row {
    display: flex;
    align-items: center;
    gap: 5px;
    height: 14px;
    white-space: nowrap;
}

.icons-only {
    margin-left: 2px;
    width: 24px;
}

.gap-l {
    margin-left: 6px;
}

.si {
    width: 14px;
    height: 14px;
}

.row.selected {
    background-color: #46648c;
    outline: 2px solid #46648c;
    width: 14px;
}

/* layer combo */
.layer-main {
    margin-left: 3px;
    flex: 1;
    display: flex;
    flex-direction: column;
}

.layer-combo {
    width: 151px;
    height: 16px;
    flex: none;
    display: flex;
    align-items: center;
    gap: 4px;
    padding: 0 3px;
    background: #3f3f3f;
    border: 1px solid #333;
    border-radius: 1px;
    position: relative;
}

.swatch {
    width: 10px;
    height: 10px;
    background-color: #fff;
    border: 1px solid #222;
}

.layer-name {
    color: #8fc3ea;
    font-size: 10px;
    margin-left: 2px;
}

.combo-caret {
    position: absolute;
    right: 2px;
    top: 5px;
    border-left: 3px solid transparent;
    border-right: 3px solid transparent;
    border-top: 3.500px solid #eee;
}

.layer-row {
    display: flex;
    gap: 3.500px;
    padding-left: 3px;
    margin-top: 4px;
}

/* properties */
.prop-icons {
    margin-left: 0;
    width: 14px;
    gap: 4px;
}

.wheel {
    width: 13px;
    height: 13px;
    border-radius: 50%;
    background: conic-gradient(#e0503c, #e8b03c, #6cb04c, #3c90d0, #9050b0, #e0503c);
}

.prop-combos {
    margin-left: 2px;
    display: flex;
    flex-direction: column;
    gap: 1px;
}

.pcombo {
    width: 100px;
    height: 16.500px;
    display: flex;
    align-items: center;
    padding: 0 17px 0 1px;
    background: #454545;
    border: 1px solid #3a3a3a;
    position: relative;
}

.big-sw {
    width: 11px;
    height: 11px;
    margin-left: 9px;
    border-color: #eee;
}

.bylayer {
    margin-left: auto;
    font-family: "DejaVu Sans", sans-serif;
    font-size: 8.500px;
    color: #ccc;
}

.bylayer.first {
    margin-right: 22px;
}

.ln {
    width: 49px;
    height: 1px;
    background-color: #eee;
}

.ln.thick {
    height: 1.500px;
}

/* file tabs */
.file-tabs {
    height: 22px;
    flex: none;
    display: flex;
    align-items: flex-end;
    padding: 0 0 2px 16px;
    gap: 2px;
    background-color: #333;
}

.ftab {
    width: 89px;
    height: 16px;
    padding-left: 8px;
    line-height: 16px;
    background-color: #444;
    border-radius: 6px 6px 0 0;
    color: #999;
    position: relative;
}

.ftab.current {
    width: 88px;
    padding-left: 6px;
    background-color: #555;
    color: #bbb;
    font-family: "Noto Sans", sans-serif;
    font-size: 9.500px;
}

.ftab b {
    position: absolute;
    right: 7px;
    top: 0;
    color: #999;
    font-size: 11px;
}

.ftab-add {
    width: 15px;
    height: 13px;
    margin-left: 5px;
    background-color: #4a4a4a;
    border-radius: 3px;
    color: #ddd;
    font-family: "Liberation Sans", sans-serif;
    font-size: 12px;
    font-weight: bold;
    line-height: 12px;
    text-align: center;
}

/* drawing area */
.canvas {
    flex: 1;
    position: relative;
    overflow: hidden;
    border-top: 2px solid #4a4a4a;
    background-color: #000;
    background-image:
        linear-gradient(90deg, #1c1c24 1px, transparent 1px),
        linear-gradient(#1c1c24 1px, transparent 1px),
        linear-gradient(90deg, #121218 1px, transparent 1px),
        linear-gradient(#121218 1px, transparent 1px);
    background-size: 66px 66px, 66px 66px, 13.200px 13.200px, 13.200px 13.200px;
    background-position: 10px 0, 0 40px, 10px 0, 0 1px;
}

.drawing {
    position: absolute;
    left: 0;
    top: -128px;
}

.win-ctrl {
    position: absolute;
    left: 950px;
    top: 3px;
    width: 36px;
    height: 12px;
    display: flex;
    align-items: center;
    gap: 7px;
}

.wc-min {
    width: 8px;
    height: 2px;
    margin-top: 3px;
    background-color: #ddd;
}

.wc-max {
    width: 8px;
    height: 8px;
    border: 1.500px solid #ddd;
}

.wc-close {
    color: #ddd;
    font-size: 9px;
    font-weight: bold;
    line-height: 12px;
}

.viewcube {
    position: absolute;
    left: 914px;
    top: 27px;
    width: 70px;
    height: 70px;
}

.ring {
    position: absolute;
    left: 3px;
    top: 3px;
    width: 64px;
    height: 64px;
    border-radius: 50%;
    border: 6px solid #3c3c3c;
}

.face {
    position: absolute;
    left: 21px;
    top: 21px;
    width: 28px;
    height: 28px;
    background-color: #b0b0b0;
    color: #777;
    font-size: 16px;
    line-height: 28px;
    text-align: center;
}

.dir {
    position: absolute;
    color: #b4b4b4;
    font-size: 10px;
    line-height: 12px;
}

.dir.n { left: 30px; top: 0; }
.dir.s { left: 30px; top: 60px; }
.dir.w { left: -1px; top: 30px; }
.dir.e { left: 60px; top: 30px; }

.wcs {
    position: absolute;
    left: 931px;
    top: 109px;
    width: 34px;
    height: 12px;
    padding-left: 3px;
    border-radius: 3px;
    background-color: #5a5a68;
    color: #94949e;
    font-family: "Liberation Sans", sans-serif;
    font-size: 7.500px;
    line-height: 12px;
}

.navbar {
    position: absolute;
    left: 968px;
    top: 140px;
    width: 23px;
    height: 155px;
    padding: 6px 0 0 2px;
    border-radius: 3px;
    background-color: #3a3a3c;
}

.dyn-input {
    position: absolute;
    left: 537px;
    top: 149px;
    width: 35px;
    height: 15px;
    padding-left: 2px;
    background-color: #cdeecb;
    border: 1px solid #777;
    color: #333;
    font-family: "Liberation Mono", monospace;
    font-size: 9px;
    line-height: 14px;
}

.dyn-input::after {
    content: "";
    display: inline-block;
    width: 1px;
    height: 10px;
    vertical-align: -2px;
    background-color: #333;
}

.ucs-y {
    position: absolute;
    left: 12px;
    top: 321px;
    color: #b4b4b4;
    font-family: "DejaVu Sans", sans-serif;
    font-size: 11px;
    line-height: 14px;
}

.history {
    position: absolute;
    left: 42px;
    top: 329px;
    display: flex;
    flex-direction: column;
    gap: 1px;
    font-family: "Noto Sans CJK SC", monospace;
    font-size: 9.300px;
    color: #c4c4c4;
}

.history div {
    height: 10.500px;
    padding-left: 2px;
    width: 262px;
    background-color: #575757;
    line-height: 10.500px;
    white-space: nowrap;
}

.lat {
    font-family: "DejaVu Sans Mono", monospace;
    font-size: 8.400px;
    white-space: pre;
}

.cmdline {
    position: absolute;
    left: 0;
    top: 363px;
    width: 683px;
    height: 20px;
    display: flex;
}

.cmd-handle {
    width: 40px;
    padding-left: 3px;
    display: flex;
    align-items: center;
    gap: 5px;
    background-color: #4a4a4a;
}

.cmd-handle svg {
    margin-left: 2px;
}

.grip {
    width: 3px;
    height: 14px;
    background-color: #777;
}

.cmd-x {
    color: #eee;
    font-size: 9px;
    font-weight: bold;
}

.cmd-input {
    flex: 1;
    padding-left: 3px;
    display: flex;
    align-items: center;
    gap: 3.500px;
    background-color: #c9eec9;
    color: #222;
    font-family: "Noto Sans CJK SC", monospace;
    font-size: 9.400px;
    white-space: nowrap;
    position: relative;
}

.cmd-input b {
    margin: 0 1px 0 0;
}

.opt {
    padding: 1px 1px;
    background-color: #d4d8d4;
    line-height: 12px;
}

.opt.first {
    margin-left: -5px;
}

.opt em {
    font-style: normal;
    color: #1c3fd0;
}

.cmd-up {
    position: absolute;
    right: 2px;
    top: 8px;
    border-left: 3px solid transparent;
    border-right: 3px solid transparent;
    border-bottom: 4px solid #333;
}

.badge {
    position: absolute;
    left: 987px;
    top: 304px;
    width: 32px;
    height: 32px;
    padding-left: 3px;
    border-radius: 50%;
    background-color: #4cb848;
    border: 1px solid #d8e8d8;
    color: #fff;
    font-family: "Liberation Sans", sans-serif;
    font-size: 9px;
    font-weight: bold;
    line-height: 30px;
}

.watermark {
    position: absolute;
    left: 767px;
    top: 300px;
    width: 180px;
    color: #bdbdbd;
}

.wm-top {
    display: flex;
    align-items: flex-end;
    height: 55px;
}

.wm-bai {
    margin-bottom: -6px;
    font-family: "Liberation Sans", sans-serif;
    font-size: 38px;
    font-weight: bold;
    line-height: 38px;
}

.wm-paw {
    margin-left: 3px;
}

.wm-du {
    fill: #000;
    font-family: "Liberation Sans", sans-serif;
    font-size: 15px;
    font-weight: bold;
}

.wm-jy {
    margin: 0 0 1px 1px;
    font-family: "Noto Sans CJK SC", sans-serif;
    font-size: 30px;
    font-weight: bold;
    line-height: 32px;
    white-space: nowrap;
}

.wm-url {
    font-family: "Open Sans", sans-serif;
    font-size: 20.500px;
    line-height: 24px;
    white-space: nowrap;
}

/* bottom bars */
.bottom {
    height: 23px;
    flex: none;
    display: flex;
    align-items: flex-start;
    border-bottom: 2px solid #a8c4da;
    background-color: #3a3a3a;
    position: relative;
}

.layout-tabs {
    display: flex;
    gap: 2px;
    padding: 2px 0 0 10px;
}

.ltab {
    width: 38px;
    height: 14px;
    background-color: #4a4a4a;
    border-radius: 0 0 5px 5px;
    color: #9a9a9a;
    line-height: 14px;
    text-align: center;
}

.ltab.current {
    background-color: #6a6a6a;
    color: #eee;
}

.ltab-add {
    width: 15px;
    height: 11px;
    margin-left: 1px;
    background-color: #4a4a4a;
    border-radius: 0 0 3px 3px;
    color: #ddd;
    font-family: "Liberation Sans", sans-serif;
    font-weight: bold;
    line-height: 11px;
    text-align: center;
}

.status {
    margin-left: auto;
    margin-right: 4px;
    height: 19px;
    width: 420px;
    padding-left: 2px;
    display: flex;
    align-items: center;
    gap: 3px;
    background-color: #4a4a4a;
}

.st-model {
    flex: none;
    width: 19px;
    background-color: #5e5e5e;
    color: #eee;
    font-size: 9px;
    line-height: 15px;
    text-align: center;
    white-space: nowrap;
}

.st {
    flex: none;
    height: 17px;
    min-width: 15px;
    display: flex;
    align-items: center;
    justify-content: center;
}

.st.on {
    width: 16px;
    background-color: #4f86c0;
}

.st-sep {
    flex: none;
    width: 1px;
    height: 17px;
    margin: 0 1px;
    background-color: #626262;
}

.st-scale {
    flex: none;
    margin-left: 3px;
    color: #ddd;
    font-family: "Liberation Serif", serif;
    font-size: 10px;
}

.window-edge {
    position: absolute;
    right: 0;
    top: 128px;
    width: 5px;
    height: 383px;
    background-color: #a8cde8;
}
```
